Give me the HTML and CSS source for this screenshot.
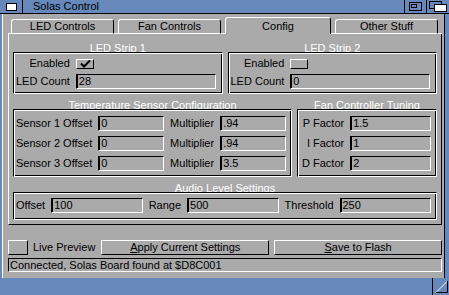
FILE: index.html
```html
<!DOCTYPE html>
<html>
<head>
<meta charset="utf-8">
<title>Solas Control</title>
<link rel="stylesheet" href="styles.css">
</head>
<body>
<div class="window">
  <div class="titlebar">
    <div class="gadget close"><svg width="11" height="8" viewBox="0 0 11 8"><rect x="0.5" y="0.5" width="10" height="7" fill="#fff" stroke="#000"/></svg></div>
    <div class="title">Solas Control</div>
    <div class="gadget zoom"><svg width="13" height="9" viewBox="0 0 13 9"><rect x="0.5" y="0.5" width="12" height="8" fill="none" stroke="#000"/><rect x="2.5" y="2.5" width="5" height="3" fill="none" stroke="#000"/></svg></div>
    <div class="gadget depth"><svg width="18" height="11" viewBox="0 0 18 11"><rect x="0.5" y="0.5" width="12" height="7" fill="#6688bb" stroke="#000"/><rect x="5.5" y="3.5" width="12" height="7" fill="#fff" stroke="#000"/></svg></div>
  </div>
  <div class="client">
    <div class="tabs">
      <div class="tline lead"></div>
      <div class="tab">LED Controls</div>
      <div class="tline fill"></div>
      <div class="tab">Fan Controls</div>
      <div class="tline fill"></div>
      <div class="tab active">Config</div>
      <div class="tline fill"></div>
      <div class="tab">Other Stuff</div>
      <div class="tline trail"></div>
    </div>
    <div class="panel">
      <div class="row">
        <div class="group half">
          <div class="gtitle"><span>LED Strip 1</span></div>
          <div class="gframe form2">
            <div class="label">Enabled</div>
            <div class="check"><svg width="16" height="8" viewBox="0 0 16 8"><path d="M4 3.5 L7 6.5 L13 0.5" fill="none" stroke="#000" stroke-width="2"/></svg></div>
            <div class="label">LED Count</div>
            <div class="field">28</div>
          </div>
        </div>
        <div class="group half">
          <div class="gtitle"><span>LED Strip 2</span></div>
          <div class="gframe form2">
            <div class="label">Enabled</div>
            <div class="check"></div>
            <div class="label">LED Count</div>
            <div class="field">0</div>
          </div>
        </div>
      </div>
      <div class="row">
        <div class="group temp">
          <div class="gtitle"><span>Temperature Sensor Configuration</span></div>
          <div class="gframe form4">
            <div class="label">Sensor 1 Offset</div>
            <div class="field">0</div>
            <div class="label">Multiplier</div>
            <div class="field">.94</div>
            <div class="label">Sensor 2 Offset</div>
            <div class="field">0</div>
            <div class="label">Multiplier</div>
            <div class="field">.94</div>
            <div class="label">Sensor 3 Offset</div>
            <div class="field">0</div>
            <div class="label">Multiplier</div>
            <div class="field">3.5</div>
          </div>
        </div>
        <div class="group fan">
          <div class="gtitle"><span>Fan Controller Tuning</span></div>
          <div class="gframe formfan">
            <div class="label">P Factor</div>
            <div class="field">1.5</div>
            <div class="label">I Factor</div>
            <div class="field">1</div>
            <div class="label">D Factor</div>
            <div class="field">2</div>
          </div>
        </div>
      </div>
      <div class="group">
        <div class="gtitle"><span>Audio Level Settings</span></div>
        <div class="gframe form6">
          <div class="label">Offset</div>
          <div class="field">100</div>
          <div class="label">Range</div>
          <div class="field">500</div>
          <div class="label">Threshold</div>
          <div class="field">250</div>
        </div>
      </div>
    </div>
    <div class="actions">
      <div class="check big"></div>
      <div class="alabel">Live Preview</div>
      <div class="button"><u>A</u>pply Current Settings</div>
      <div class="button"><u>S</u>ave to Flash</div>
    </div>
    <div class="status">Connected, Solas Board found at $D8C001</div>
  </div>
  <div class="bottombar">
    <div class="sizer"><svg width="16" height="17" viewBox="0 0 16 17"><path d="M3 14.5 L14.5 3" stroke="#fff" fill="none"/><path d="M14.5 3 L14.5 14.5 L3 14.5" stroke="#000" fill="none"/></svg></div>
  </div>
</div>
</body>
</html>
```

FILE: styles.css
```css
* { box-sizing: border-box; }
html, body { margin: 0; padding: 0; }
body {
  width: 449px;
  height: 295px;
  overflow: hidden;
  background: #6688bb;
  font-family: "Liberation Sans", Arial, sans-serif;
  font-size: 11px;
  line-height: 13px;
  color: #000;
}
.window {
  display: flex;
  flex-direction: column;
  width: 449px;
  height: 295px;
  background: #6688bb;
}
.titlebar {
  flex: none;
  display: flex;
  height: 14px;
  border-bottom: 1px solid #000;
}
.gadget {
  display: flex;
  align-items: center;
  justify-content: center;
}
.gadget svg { display: block; }
.close { width: 23px; border-right: 1px solid #000; }
.title { flex: 1; padding-left: 10px; line-height: 13px; }
.zoom { width: 22px; border-left: 1px solid #000; }
.depth { width: 23px; border-left: 1px solid #000; }

.client {
  flex: 1;
  display: flex;
  flex-direction: column;
  margin: 0 4px 0 2px;
  background: #aaaaaa;
  border-left: 1px solid #fff;
  border-right: 1px solid #000;
  padding: 0 2px 0 5px;
}

/* tabs */
.tabs {
  flex: none;
  display: flex;
  align-items: flex-end;
  height: 20px;
}
.tline { height: 1px; background: #fff; }
.tline.lead { width: 3px; }
.tline.trail { width: 4px; }
.tline.fill { flex: 1; }
.tab {
  flex: none;
  width: 103px;
  height: 15px;
  border: 1px solid;
  border-color: #fff #000 #fff #fff;
  border-radius: 3px 3px 0 0;
  text-align: center;
  line-height: 13px;
}
.tab.active {
  width: 106px;
  height: 17px;
  border-bottom: none;
  padding-top: 2px;
}

/* panel */
.panel {
  flex: none;
  display: flex;
  flex-direction: column;
  gap: 5px;
  border-left: 1px solid #fff;
  border-right: 1px solid #000;
  border-bottom: 1px solid #000;
  padding: 8px 4px 4px;
}
.row { display: flex; gap: 5px; }
.group { display: flex; flex-direction: column; }
.half { flex: 1; }
.temp { flex: 279; }
.fan { flex: 140; }
.gtitle {
  height: 13px;
  margin-bottom: -3px;
  text-align: center;
  color: #fff;
  white-space: nowrap;
}
.gtitle span { background: #aaaaaa; padding: 0 2px; }
.gframe {
  flex: 1;
  border: 1px solid;
  border-color: #000 #fff #fff #000;
  box-shadow: inset 1px 1px 0 #fff, inset -1px -1px 0 #000;
}
.label { text-align: right; white-space: nowrap; }

.form2 {
  display: grid;
  grid-template-columns: auto 1fr;
  column-gap: 6px;
  row-gap: 4px;
  align-items: center;
  padding: 4px 6px 4px 2px;
}
.form4 {
  display: grid;
  grid-template-columns: auto 1fr auto 1fr;
  column-gap: 6px;
  row-gap: 5px;
  align-items: center;
  padding: 6px 5px 5px 2px;
}
.formfan {
  display: grid;
  grid-template-columns: auto 1fr;
  column-gap: 6px;
  row-gap: 5px;
  align-items: center;
  padding: 6px 5px 5px 4px;
}
.form6 {
  display: grid;
  grid-template-columns: auto 1fr auto 1fr auto 1fr;
  column-gap: 6px;
  align-items: center;
  padding: 5px 5px 6px 2px;
}

.field {
  height: 15px;
  border: 1px solid;
  border-color: #000 #fff #fff #000;
  box-shadow: inset 1px 0 0 #000;
  padding-left: 2px;
  line-height: 13px;
  white-space: nowrap;
  overflow: hidden;
}
.check {
  width: 18px;
  height: 10px;
  border: 1px solid;
  border-color: #fff #000 #000 #fff;
  display: flex;
  align-items: center;
  justify-content: center;
}
.check svg { display: block; }

/* bottom actions */
.actions {
  flex: none;
  display: flex;
  align-items: center;
  height: 15px;
  margin-top: 15px;
}
.check.big { width: 20px; height: 15px; }
.alabel { margin: 0 6px 0 5px; white-space: nowrap; }
.button {
  flex: 1;
  height: 15px;
  border: 1px solid;
  border-color: #fff #000 #000 #fff;
  text-align: center;
  line-height: 13px;
  white-space: nowrap;
}
.button + .button { margin-left: 5px; }
.button u { text-decoration-thickness: 1px; text-underline-offset: 1px; }
.status {
  flex: none;
  height: 14px;
  margin-top: 3px;
  border: 1px solid;
  border-color: #000 #fff #fff #000;
  padding-left: 1px;
  line-height: 12px;
  white-space: nowrap;
  overflow: hidden;
}

.bottombar {
  flex: none;
  height: 17px;
  display: flex;
  justify-content: flex-end;
}
.sizer {
  width: 17px;
  border-left: 1px solid #000;
}
.sizer svg { display: block; }
```
